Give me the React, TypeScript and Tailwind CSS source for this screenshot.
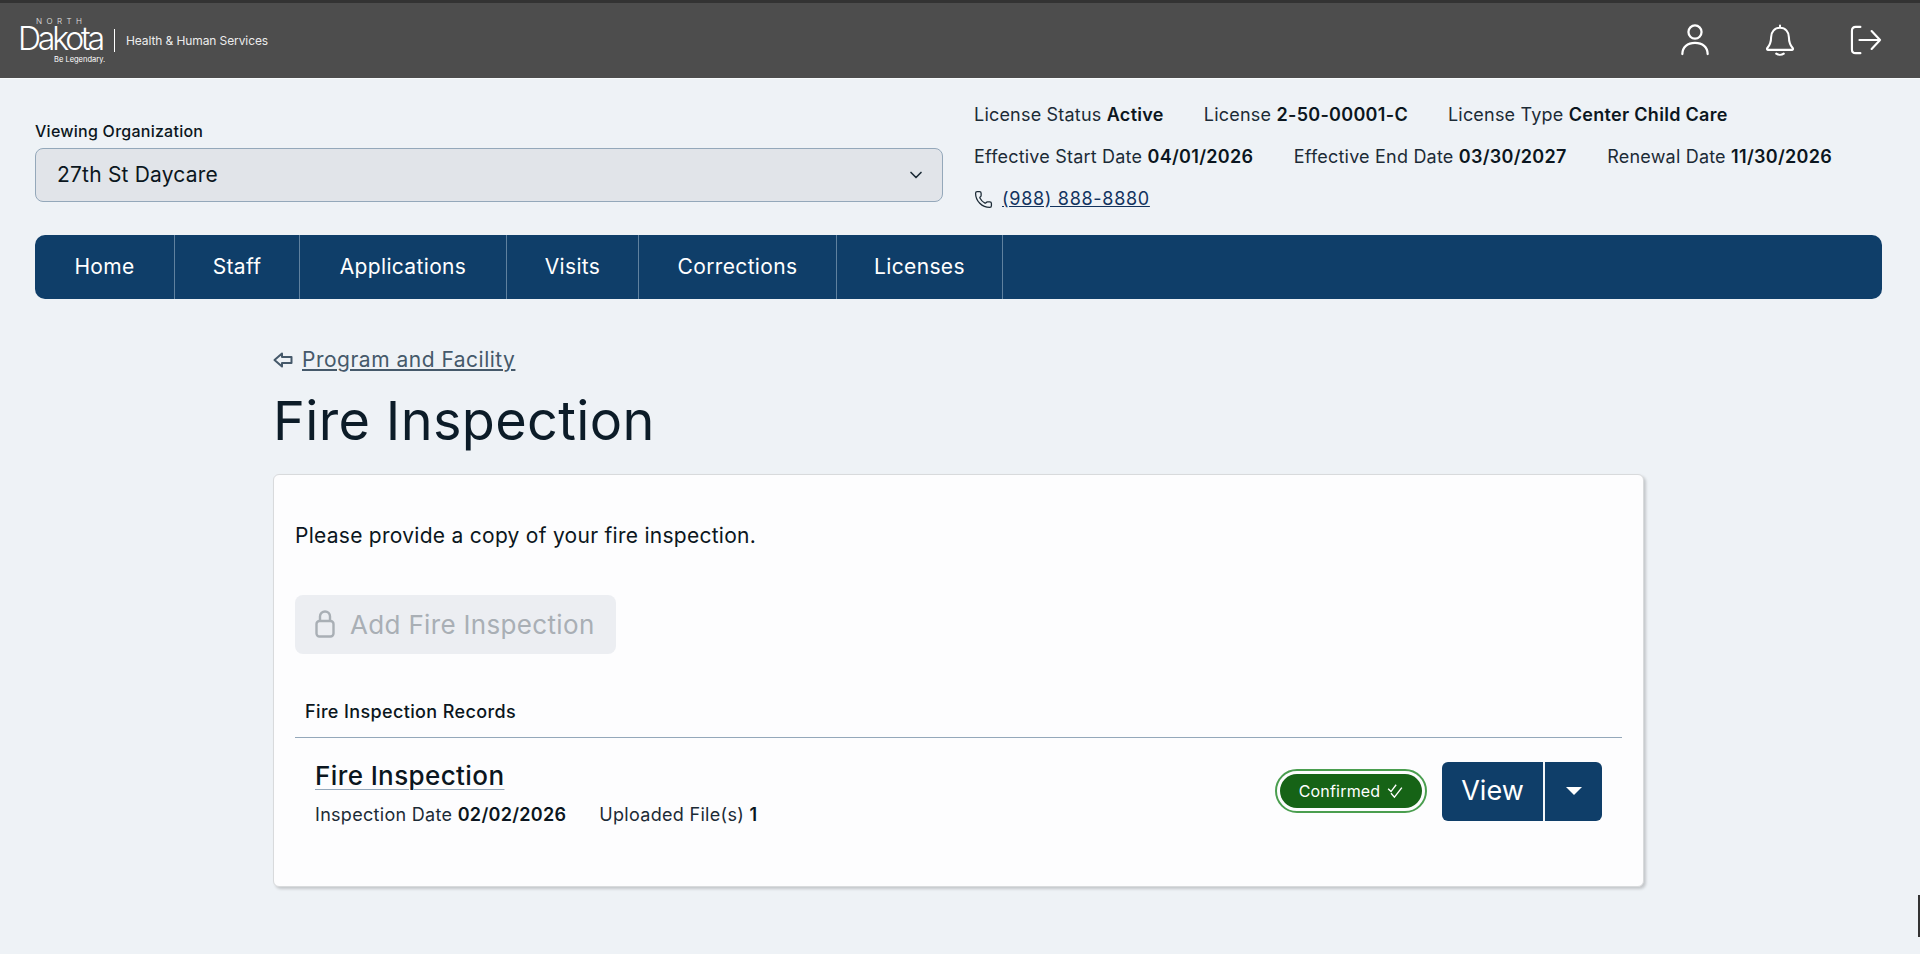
import { ChevronDown, Phone } from "lucide-react";

const font = { fontFamily: "Inter, 'Open Sans', sans-serif" };

const navItems = [
  { label: "Home", width: "w-[140px]" },
  { label: "Staff", width: "w-[125px]" },
  { label: "Applications", width: "w-[207px]" },
  { label: "Visits", width: "w-[132px]" },
  { label: "Corrections", width: "w-[198px]" },
  { label: "Licenses", width: "w-[166px]" },
];

function Meta({ label, value }: { label: string; value: string }) {
  return (
    <span className="whitespace-nowrap tracking-[0.2px] text-[#1c2b36]">
      {label} <span className="font-semibold tracking-[0.3px] text-[#0b1620]">{value}</span>
    </span>
  );
}

function UserIcon() {
  return (
    <svg viewBox="0 0 32 36" className="h-[34px] w-[30px]" fill="none" stroke="white" strokeWidth="2.4" strokeLinecap="round">
      <circle cx="16" cy="9.5" r="7" />
      <path d="M2.5 33c0-7.5 5.5-12 13.5-12s13.5 4.5 13.5 12" />
    </svg>
  );
}

function BellIcon() {
  return (
    <svg viewBox="0 0 32 36" className="h-[34px] w-[30px]" fill="none" stroke="white" strokeWidth="2.2" strokeLinecap="round" strokeLinejoin="round">
      <path d="M16 2.5v2.5M16 5c-6 0-9.5 4.5-9.5 10 0 5-1 8-4 11.5-.8 1-.2 2 .8 2h25.4c1 0 1.600-1 .8-2-3-3.500-4-6.500-4-11.500C25.500 9.500 22 5 16 5z" />
      <path d="M12 32.500c2.200 1.600 5.800 1.600 8 0" />
    </svg>
  );
}

function ExitIcon() {
  return (
    <svg viewBox="0 0 34 32" className="h-[30px] w-[32px]" fill="none" stroke="white" strokeWidth="2.300" strokeLinecap="round" strokeLinejoin="round">
      <path d="M11 2H6C3.500 2 2 3.500 2 6v20c0 2.500 1.500 4 4 4h5" />
      <path d="M10 16h22M23 6.500 32 16l-9 9.500" />
    </svg>
  );
}

function App() {
  return (
    <div style={font} className="relative min-h-[954px] bg-[#eef2f6] text-[#0b1620]">
      {/* Top bar */}
      <header className="flex h-[79px] items-center justify-between border-t-[3px] border-b border-t-[#333333] border-b-[#f8fafc] bg-[#4d4d4d] pl-[18px] pr-[38px]">
        <div className="flex items-center text-white">
          <div className="w-[86px]">
            <div className="pl-[18px] text-[8px] font-light leading-[8px] tracking-[4.400px] text-[#e5e5e5]">NORTH</div>
            <div className="text-[32px] font-light leading-[28px] tracking-[-3.200px]">Dakota</div>
            <div className="mt-[3px] pl-[36px] text-[7.500px] leading-[8px] whitespace-nowrap">Be Legendary.</div>
          </div>
          <div className="ml-[10px] h-[23px] w-px bg-white" />
          <div className="ml-[11px] text-[12px] tracking-[-0.100px] text-[#ececec]">Health &amp; Human Services</div>
        </div>
        <div className="-mt-[2px] flex items-center gap-[55px]">
          <UserIcon />
          <BellIcon />
          <ExitIcon />
        </div>
      </header>

      <div className="pl-[35px] pr-[38px]">
        {/* Organization + license info */}
        <div className="flex h-[156px]">
          <div className="w-[908px] pt-[41px]">
            <div className="text-[16px] font-medium leading-[22px] tracking-[0.25px]">Viewing Organization</div>
            <div className="mt-[6px] flex h-[54px] items-center justify-between rounded-[8px] border border-[#94a8ba] bg-[#e1e4e9] pl-[21px] pr-[16px] text-[21px] tracking-[0.2px]">
              27th St Daycare
              <ChevronDown className="h-5 w-5 text-[#1c2b36]" strokeWidth={2} />
            </div>
          </div>
          <div className="ml-[31px] pt-[15px] text-[18px] leading-[42px]">
            <div className="flex gap-[40px]">
              <Meta label="License Status" value="Active" />
              <Meta label="License" value="2-50-00001-C" />
              <Meta label="License Type" value="Center Child Care" />
            </div>
            <div className="flex gap-[40.500px]">
              <Meta label="Effective Start Date" value="04/01/2026" />
              <Meta label="Effective End Date" value="03/30/2027" />
              <Meta label="Renewal Date" value="11/30/2026" />
            </div>
            <div className="flex items-center gap-[9px]">
              <Phone className="h-[19px] w-[19px] text-[#1c2b36]" strokeWidth={1.600} />
              <a className="tracking-[0.7px] text-[#12335e] underline">(988) 888-8880</a>
            </div>
          </div>
        </div>

        {/* Nav */}
        <nav className="flex h-[64px] rounded-[10px] bg-[#0f3e69] text-[21px] tracking-[0.35px] text-white">
          {navItems.map((item) => (
            <a key={item.label} className={`flex items-center justify-center border-r border-[#5f819f] ${item.width}`}>{item.label}</a>
          ))}
        </nav>

        {/* Main */}
        <main className="mx-auto mt-[45px] w-[1371px]">
          <div className="flex items-center gap-[9px] text-[21px] tracking-[0.5px] text-[#45596a]">
            <svg viewBox="0 0 20 16" className="h-[16px] w-[20px]" fill="none" stroke="#45596a" strokeWidth="2" strokeLinejoin="round">
              <path d="M9 1.500 1.500 8 9 14.500V11h9.500V5H9z" />
            </svg>
            <a className="underline">Program and Facility</a>
          </div>
          <h1 className="mt-[10px] text-[54px] font-normal leading-[70px] tracking-[0.35px] text-[#0c1c28]">Fire Inspection</h1>
          <section className="mt-[18px] h-[413px] rounded-[6px] border border-[#d8dadc] bg-[#fdfdfe] px-[21px] pt-[47px] shadow-[2px_2px_3px_rgba(0,0,0,0.18)]">
            <p className="text-[21px] leading-[28px] tracking-[0.27px]">Please provide a copy of your fire inspection.</p>
            <div className="mt-[45px] flex h-[59px] w-[321px] items-center gap-[15px] rounded-[8px] bg-[#eceef2] pl-[20px] text-[26px] tracking-[0.33px] text-[#a9afb5]">
              <svg viewBox="0 0 20 28" className="h-[28px] w-[20px]" fill="none" stroke="#a9afb5" strokeWidth="2.400" strokeLinejoin="round">
                <rect x="1.500" y="11" width="17" height="15.500" rx="3" />
                <path d="M5 11V6.500a5 5 0 0 1 10 0V11" />
              </svg>
              Add Fire Inspection
            </div>
            <div className="mt-[45px] border-b border-[#94a8ba] pb-[12px] pl-[10px] text-[18px] font-medium leading-[26px] tracking-[0.37px]">Fire Inspection Records</div>
            <div className="flex items-start justify-between pl-[20px] pr-[20px] pt-[24px]">
              <div>
                <div className="text-[26px] font-medium leading-[28px] tracking-[0.4px] underline decoration-[#94a8ba] decoration-1 underline-offset-[4px]">Fire Inspection</div>
                <div className="mt-[10px] flex gap-[33px] text-[18px] leading-[30px] text-[#1c2b36]">
                  <span className="whitespace-nowrap tracking-[0.3px]">Inspection Date <span className="font-semibold text-[#0b1620]">02/02/2026</span></span>
                  <span className="tracking-[0.3px]">Uploaded File(s) <span className="font-semibold text-[#0b1620]">1</span></span>
                </div>
              </div>
              <div className="flex items-center gap-[15px]">
                <div className="rounded-full border-2 border-[#4a9e4f] p-[3px]">
                  <div className="flex h-[34px] w-[142px] items-center justify-center gap-[7px] rounded-full bg-[#166316] text-[16px] tracking-[0.2px] text-white">
                    Confirmed
                    <svg viewBox="0 0 14 14" className="h-[16px] w-[16px]" fill="none" stroke="white" strokeWidth="1.200">
                      <path d="M1 5l2.500 2.500L8 1.500M3.500 9l3 3.500L13 4" />
                    </svg>
                  </div>
                </div>
                <div className="flex h-[59px] w-[160px] rounded-[6px] bg-[#0f3e69] text-white">
                  <div className="flex w-[103px] items-center justify-center border-r-2 border-[#f3f6f9] text-[27px]">View</div>
                  <div className="flex flex-1 items-center justify-center">
                    <svg viewBox="0 0 16 8" className="h-[8px] w-[16px]" fill="white"><path d="M0 0h16l-8 8z" /></svg>
                  </div>
                </div>
              </div>
            </div>
          </section>
        </main>
      </div>

      {/* scrollbar sliver at the window edge */}
      <div className="absolute bottom-[17px] right-0 h-[42px] w-[2px] bg-[#333333]" />
    </div>
  );
}

export default App;
